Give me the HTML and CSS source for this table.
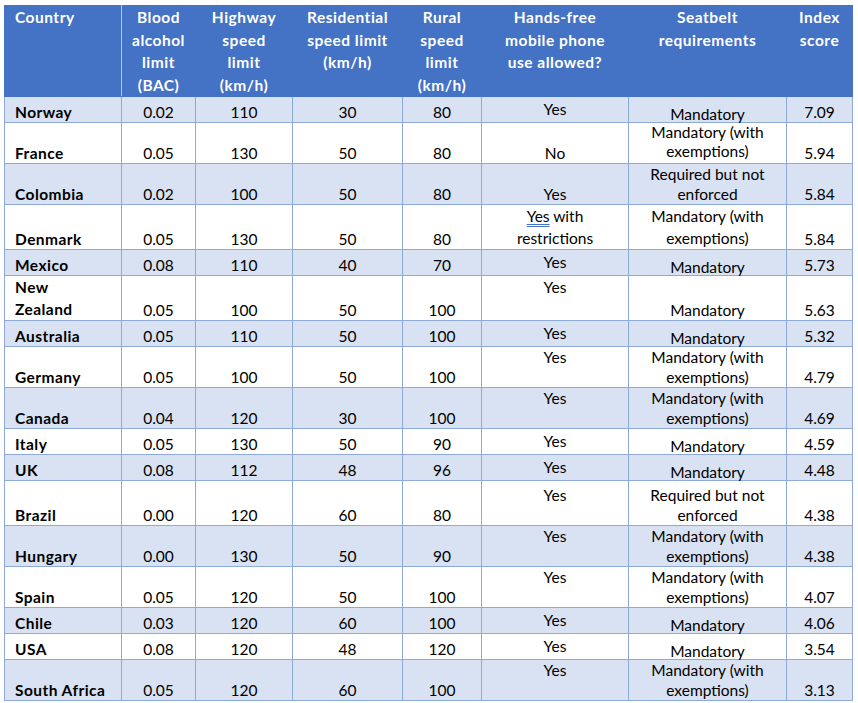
FILE: index.html
```html
<!DOCTYPE html>
<html lang="en">
<head>
<meta charset="utf-8">
<title>Road safety index</title>
<link rel="stylesheet" href="styles.css">
</head>
<body>
<table class="roads">
  <colgroup>
    <col class="w-country">
    <col class="w-bac">
    <col class="w-hwy">
    <col class="w-res">
    <col class="w-rural">
    <col class="w-phone">
    <col class="w-belt">
    <col class="w-index">
  </colgroup>
  <thead>
    <tr class="head">
      <th class="country">Country</th>
      <th>Blood<br>alcohol<br>limit<br>(BAC)</th>
      <th>Highway<br>speed<br>limit<br>(km/h)</th>
      <th>Residential<br>speed limit<br>(km/h)</th>
      <th>Rural<br>speed<br>limit<br>(km/h)</th>
      <th>Hands-free<br>mobile phone<br>use allowed?</th>
      <th>Seatbelt<br>requirements</th>
      <th>Index<br>score</th>
    </tr>
  </thead>
  <tbody>
    <tr class="one">
      <td class="country">Norway</td><td>0.02</td><td>110</td><td>30</td><td>80</td>
      <td class="yes">Yes</td><td class="belt">Mandatory</td><td>7.09</td>
    </tr>
    <tr class="two">
      <td class="country">France</td><td>0.05</td><td>130</td><td>50</td><td>80</td>
      <td>No</td><td class="belt raised">Mandatory (with<br>exemptions)</td><td>5.94</td>
    </tr>
    <tr class="two">
      <td class="country">Colombia</td><td>0.02</td><td>100</td><td>50</td><td>80</td>
      <td>Yes</td><td class="belt">Required but not<br>enforced</td><td>5.84</td>
    </tr>
    <tr class="tall">
      <td class="country">Denmark</td><td>0.05</td><td>130</td><td>50</td><td>80</td>
      <td class="wide"><span class="squiggle">Yes</span> with<br>restrictions</td><td class="belt wide">Mandatory (with<br>exemptions)</td><td>5.84</td>
    </tr>
    <tr class="one">
      <td class="country">Mexico</td><td>0.08</td><td>110</td><td>40</td><td>70</td>
      <td class="yes">Yes</td><td class="belt">Mandatory</td><td>5.73</td>
    </tr>
    <tr class="tall">
      <td class="country wide">New<br>Zealand</td><td>0.05</td><td>100</td><td>50</td><td>100</td>
      <td class="wide">Yes<br>&nbsp;</td><td class="belt">Mandatory</td><td>5.63</td>
    </tr>
    <tr class="one">
      <td class="country">Australia</td><td>0.05</td><td>110</td><td>50</td><td>100</td>
      <td class="yes">Yes</td><td class="belt">Mandatory</td><td>5.32</td>
    </tr>
    <tr class="two">
      <td class="country">Germany</td><td>0.05</td><td>100</td><td>50</td><td>100</td>
      <td>Yes<br>&nbsp;</td><td class="belt">Mandatory (with<br>exemptions)</td><td>4.79</td>
    </tr>
    <tr class="two">
      <td class="country">Canada</td><td>0.04</td><td>120</td><td>30</td><td>100</td>
      <td>Yes<br>&nbsp;</td><td class="belt">Mandatory (with<br>exemptions)</td><td>4.69</td>
    </tr>
    <tr class="one">
      <td class="country">Italy</td><td>0.05</td><td>130</td><td>50</td><td>90</td>
      <td class="yes">Yes</td><td class="belt">Mandatory</td><td>4.59</td>
    </tr>
    <tr class="one">
      <td class="country">UK</td><td>0.08</td><td>112</td><td>48</td><td>96</td>
      <td class="yes">Yes</td><td class="belt">Mandatory</td><td>4.48</td>
    </tr>
    <tr class="tall">
      <td class="country">Brazil</td><td>0.00</td><td>120</td><td>60</td><td>80</td>
      <td>Yes<br>&nbsp;</td><td class="belt">Required but not<br>enforced</td><td>4.38</td>
    </tr>
    <tr class="two">
      <td class="country">Hungary</td><td>0.00</td><td>130</td><td>50</td><td>90</td>
      <td>Yes<br>&nbsp;</td><td class="belt">Mandatory (with<br>exemptions)</td><td>4.38</td>
    </tr>
    <tr class="two">
      <td class="country">Spain</td><td>0.05</td><td>120</td><td>50</td><td>100</td>
      <td>Yes<br>&nbsp;</td><td class="belt">Mandatory (with<br>exemptions)</td><td>4.07</td>
    </tr>
    <tr class="one">
      <td class="country">Chile</td><td>0.03</td><td>120</td><td>60</td><td>100</td>
      <td class="yes">Yes</td><td class="belt">Mandatory</td><td>4.06</td>
    </tr>
    <tr class="one">
      <td class="country">USA</td><td>0.08</td><td>120</td><td>48</td><td>120</td>
      <td class="yes">Yes</td><td class="belt">Mandatory</td><td>3.54</td>
    </tr>
    <tr class="two">
      <td class="country">South Africa</td><td>0.05</td><td>120</td><td>60</td><td>100</td>
      <td>Yes<br>&nbsp;</td><td class="belt">Mandatory (with<br>exemptions)</td><td>3.13</td>
    </tr>
  </tbody>
</table>
</body>
</html>
```

FILE: styles.css
```css
html, body {
  margin: 0;
  background: #ffffff;
}

body {
  padding: 5px 0 0 4px;
  font-family: Lato, "Liberation Sans", Arial, sans-serif;
}

.roads {
  border-collapse: collapse;
  table-layout: fixed;
  width: 848px;
  font-size: 15.5px;
  color: #000000;
}

.w-country { width: 117px; }
.w-bac { width: 74px; }
.w-hwy { width: 97px; }
.w-res { width: 110px; }
.w-rural { width: 79px; }
.w-phone { width: 147px; }
.w-belt { width: 158px; }
.w-index { width: 66px; }

.head {
  height: 89px;
}

.roads th {
  background: #4472c4;
  color: #ffffff;
  font-weight: 700;
  letter-spacing: 0.5px;
  text-align: center;
  vertical-align: top;
  line-height: 22.5px;
  padding: 0 2px;
  border: 1px solid #4472c4;
  white-space: nowrap;
}

.roads th.country {
  text-align: left;
  padding-left: 10px;
  border-right-color: #b4c6e7;
}

.roads td {
  border: 1px solid #8eaadb;
  text-align: center;
  vertical-align: bottom;
  line-height: 20px;
  padding: 0 2px;
  white-space: nowrap;
}

.roads td.country {
  text-align: left;
  font-weight: 700;
  letter-spacing: 0.45px;
  padding-left: 10px;
}

.roads tbody tr:nth-child(odd) td {
  background: #d9e2f3;
}

.one { height: 26px; }
.two { height: 41px; }
.tall { height: 45px; }

.roads td.wide { line-height: 22px; }
.one td.yes { padding-bottom: 3px; }
.one td.belt { line-height: 16px; }
.roads td.raised { vertical-align: top; line-height: 19px; }

.squiggle {
  text-decoration: underline double;
  text-decoration-color: #4472c4;
  text-decoration-thickness: 1px;
  text-underline-offset: 2px;
}
```
